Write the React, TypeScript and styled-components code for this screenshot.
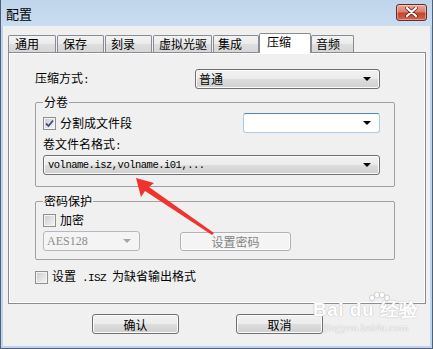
import React from "react";
import styled, { createGlobalStyle } from "styled-components";

const GlobalStyle = createGlobalStyle`
  html, body {
    margin: 0;
    padding: 0;
    background: #ffffff;
  }
  body {
    font-family: "Noto Sans CJK SC", "Liberation Sans", sans-serif;
    font-size: 12px;
    color: #000;
  }
`;

const cjk = `"Noto Sans CJK SC", "Liberation Sans", sans-serif`;

const Window = styled.div`
  position: relative;
  width: 433px;
  height: 349px;
  box-sizing: border-box;
  border: 1px solid #4f6275;
  border-top: none;
  background: #bcd4ee;
  display: flex;
  flex-direction: column;
  overflow: hidden;
`;

const TitleBar = styled.div`
  height: 26px;
  flex: none;
  display: flex;
  align-items: center;
  justify-content: space-between;
  padding: 0 5px 0 5px;
  background: linear-gradient(#c0d5ec, #cadcf0);
`;

const Title = styled.span`
  font-family: ${cjk};
  font-size: 13px;
  line-height: 14px;
  margin-top: 2px;
`;

const CloseButton = styled.div`
  width: 31px;
  height: 17px;
  box-sizing: border-box;
  margin-top: -2px;
  border: 1px solid #6a2b22;
  border-radius: 3px;
  background: linear-gradient(#e9a99b 0%, #d9806f 45%, #c3442f 55%, #d0654f 100%);
  box-shadow: inset 0 0 0 1px rgba(255, 255, 255, 0.35);
  display: flex;
  align-items: center;
  justify-content: center;
`;

const Client = styled.div`
  flex: 1;
  margin: 0 2px 2px 2px;
  background: #f0f0f0;
  display: flex;
  flex-direction: column;
  padding: 0 4px 0 5px;
`;

const TabStrip = styled.div`
  display: flex;
  align-items: flex-end;
  height: 19px;
  margin-top: 7px;
`;

const Tab = styled.div<{ $w: number; $ml: number; $pl: number; $active?: boolean }>`
  box-sizing: border-box;
  width: ${(p) => p.$w}px;
  margin-left: ${(p) => p.$ml}px;
  height: ${(p) => (p.$active ? 20 : 17)}px;
  margin-bottom: ${(p) => (p.$active ? -1 : 0)}px;
  padding-left: ${(p) => p.$pl}px;
  border: 1px solid #898c95;
  border-bottom: none;
  border-radius: 2px 2px 0 0;
  background: ${(p) =>
    p.$active ? "#ffffff" : "linear-gradient(#f3f3f3 0%, #ebebeb 50%, #dedede 51%, #d6d6d6 100%)"};
  font-family: ${cjk};
  font-size: 12px;
  line-height: ${(p) => (p.$active ? 15 : 16)}px;
  position: relative;
  z-index: ${(p) => (p.$active ? 2 : 1)};
  white-space: nowrap;
`;

const Panel = styled.div`
  width: 418px;
  height: 252px;
  box-sizing: border-box;
  border: 1px solid #898c95;
  box-shadow: inset 0 0 0 1px #ffffff;
  background: #f0f0f0;
  padding: 16px 0 0 26px;
  display: flex;
  flex-direction: column;
`;

const Row = styled.div`
  display: flex;
  align-items: center;
`;

const Label = styled.span<{ $w?: number; $disabled?: boolean }>`
  font-family: ${cjk};
  font-size: 12px;
  line-height: 14px;
  width: ${(p) => (p.$w ? `${p.$w}px` : "auto")};
  color: ${(p) => (p.$disabled ? "#8d8d8d" : "#000")};
  white-space: pre;
`;

const Latin = styled.span`
  font-family: "Liberation Mono", monospace;
  font-size: 11px;
  letter-spacing: -0.6px;
`;

const Combo = styled.div<{ $w: number; $variant?: "button" | "edit" | "disabled" }>`
  box-sizing: border-box;
  width: ${(p) => p.$w}px;
  height: 20px;
  border-radius: 3px;
  border: 1px solid
    ${(p) => (p.$variant === "edit" ? "#abcbe6" : p.$variant === "disabled" ? "#b6b9bc" : "#707070")};
  border-top-color: ${(p) => (p.$variant === "edit" ? "#4f86b3" : undefined)};
  background: ${(p) =>
    p.$variant === "edit"
      ? "#ffffff"
      : p.$variant === "disabled"
      ? "#f4f4f4"
      : "linear-gradient(#f2f2f2 0%, #ebebeb 50%, #dddddd 51%, #cfcfcf 100%)"};
  box-shadow: ${(p) => (p.$variant === "button" || !p.$variant ? "inset 0 0 0 1px #fbfbfb" : "none")};
  display: flex;
  align-items: center;
  justify-content: space-between;
  padding: 0 8px 0 3px;
`;

const ComboText = styled.span<{ $mono?: boolean; $disabled?: boolean }>`
  font-family: ${(p) => (p.$mono ? `"Liberation Mono", monospace` : p.$disabled ? `"Liberation Serif", serif` : cjk)};
  font-size: ${(p) => (p.$mono ? "10.5px" : "12px")};
  letter-spacing: ${(p) => (p.$mono ? "-0.5px" : "0")};
  line-height: 14px;
  color: ${(p) => (p.$disabled ? "#8d8d8d" : "#000")};
  white-space: nowrap;
  margin-left: ${(p) => (p.$mono ? 1 : 0)}px;
`;

const Arrow = styled.span<{ $disabled?: boolean }>`
  width: 0;
  height: 0;
  border-left: 4px solid transparent;
  border-right: 4px solid transparent;
  border-top: 4px solid ${(p) => (p.$disabled ? "#a6a6a6" : "#000")};
`;

const Group = styled.div<{ $mt: number; $pb: number }>`
  box-sizing: border-box;
  width: 360px;
  margin-top: ${(p) => p.$mt}px;
  border: 1px solid #a0a0a0;
  border-radius: 2px;
  padding: 0 14px ${(p) => p.$pb}px 7px;
  display: flex;
  flex-direction: column;
`;

const Legend = styled.span`
  align-self: flex-start;
  margin-top: -8px;
  padding: 0 1px;
  background: #f0f0f0;
  font-family: ${cjk};
  font-size: 12px;
  line-height: 14px;
`;

const CheckBox = styled.span`
  box-sizing: border-box;
  width: 13px;
  height: 13px;
  flex: none;
  border: 1px solid #8e8f8f;
  background: linear-gradient(135deg, #cbcbcb 0%, #f6f6f6 100%);
  box-shadow: inset 0 0 0 1px #f4f4f4;
  display: flex;
  align-items: center;
  justify-content: center;
  margin-right: 4px;
`;

const PushButton = styled.div<{ $w: number; $h?: number; $disabled?: boolean }>`
  box-sizing: border-box;
  width: ${(p) => p.$w}px;
  height: ${(p) => p.$h ?? 20}px;
  border: 1px solid ${(p) => (p.$disabled ? "#adb2b5" : "#707070")};
  border-radius: 3px;
  background: ${(p) =>
    p.$disabled ? "#f4f4f4" : "linear-gradient(#f2f2f2 0%, #ebebeb 50%, #dddddd 51%, #cfcfcf 100%)"};
  box-shadow: inset 0 0 0 1px #fbfbfb;
  display: flex;
  align-items: center;
  justify-content: center;
  font-family: ${cjk};
  font-size: 12px;
  color: ${(p) => (p.$disabled ? "#838383" : "#000")};
`;

const ButtonRow = styled.div`
  display: flex;
  gap: 57px;
  margin-top: 10px;
  padding-left: 84px;
`;

const Overlay = styled.svg`
  position: absolute;
  left: 0;
  top: 0;
  pointer-events: none;
`;

const Watermark = styled.div`
  position: absolute;
  left: 312px;
  top: 292px;
  display: flex;
  flex-direction: column;
  align-items: center;
  pointer-events: none;
  color: #ffffff;
  text-shadow: 0 0 1px #b9b9b9, 0 0 1px #b9b9b9;
`;

const WmTop = styled.span`
  font-family: "Liberation Sans", sans-serif;
  font-weight: bold;
  font-size: 19px;
  line-height: 22px;
  letter-spacing: 0.5px;
`;

const WmBottom = styled.span`
  font-family: "Liberation Serif", serif;
  font-size: 11px;
  line-height: 12px;
  letter-spacing: 0.2px;
`;

const tabs = [
  { label: "通用", w: 48, ml: 0, pl: 6 },
  { label: "保存", w: 47, ml: 1, pl: 5 },
  { label: "刻录", w: 47, ml: 1, pl: 5 },
  { label: "虚拟光驱", w: 59, ml: 1, pl: 5 },
  { label: "集成", w: 46, ml: 1, pl: 4 },
  { label: "压缩", w: 52, ml: 0, pl: 7, active: true },
  { label: "音频", w: 43, ml: 0, pl: 4 },
];

const Check = () => (
  <svg width="9" height="9" viewBox="0 0 9 9">
    <path d="M1 4.5 L3.5 7 L8 1.5" fill="none" stroke="#3b4f8a" strokeWidth="1.8" />
  </svg>
);

const Paw = () => (
  <svg width="22" height="10" viewBox="0 0 22 10" style={{ marginLeft: 26, marginBottom: -3 }}>
    <g fill="#ffffff" stroke="#c4c4c4" strokeWidth="0.8">
      <ellipse cx="4" cy="6" rx="2.5" ry="3" />
      <ellipse cx="9" cy="3" rx="2.5" ry="3" />
      <ellipse cx="14" cy="3" rx="2.5" ry="3" />
      <ellipse cx="19" cy="6" rx="2.5" ry="3" />
    </g>
  </svg>
);

export default function App() {
  return (
    <>
      <GlobalStyle />
      <Window>
        <TitleBar>
          <Title>配置</Title>
          <CloseButton>
            <svg width="13" height="10" viewBox="0 0 13 10">
              <path
                d="M2 1 L11 9 M11 1 L2 9"
                stroke="#5b2118"
                strokeWidth="3.6"
                strokeLinecap="round"
              />
              <path d="M2 1 L11 9 M11 1 L2 9" stroke="#ffffff" strokeWidth="2.2" strokeLinecap="round" />
            </svg>
          </CloseButton>
        </TitleBar>
        <Client>
          <TabStrip>
            {tabs.map((t) => (
              <Tab key={t.label} $w={t.w} $ml={t.ml} $pl={t.pl} $active={t.active}>
                {t.label}
              </Tab>
            ))}
          </TabStrip>
          <Panel>
            <Row>
              <Label $w={160}>
                压缩方式<Latin>:</Latin>
              </Label>
              <Combo $w={185}>
                <ComboText>普通</ComboText>
                <Arrow />
              </Combo>
            </Row>

            <Group $mt={13} $pb={11}>
              <Legend>分卷</Legend>
              <Row style={{ marginTop: 4, justifyContent: "space-between" }}>
                <Row>
                  <CheckBox>
                    <Check />
                  </CheckBox>
                  <Label>分割成文件段</Label>
                </Row>
                <Combo $w={137} $variant="edit">
                  <span />
                  <Arrow />
                </Combo>
              </Row>
              <Label style={{ marginTop: 4 }}>
                卷文件名格式<Latin>:</Latin>
              </Label>
              <Combo $w={337} style={{ marginTop: 2 }}>
                <ComboText $mono>volname.isz,volname.i01,...</ComboText>
                <Arrow />
              </Combo>
            </Group>

            <Group $mt={14} $pb={8}>
              <Legend>密码保护</Legend>
              <Row style={{ marginTop: 5 }}>
                <CheckBox />
                <Label>加密</Label>
              </Row>
              <Row style={{ marginTop: 4 }}>
                <Combo $w={97} $variant="disabled">
                  <ComboText $disabled>AES128</ComboText>
                  <Arrow $disabled />
                </Combo>
                <PushButton $w={111} $h={19} $disabled style={{ marginLeft: 40 }}>
                  设置密码
                </PushButton>
              </Row>
            </Group>

            <Row style={{ marginTop: 9 }}>
              <CheckBox />
              <Label>
                设置<Latin> .ISZ </Latin>为缺省输出格式
              </Label>
            </Row>
          </Panel>
          <ButtonRow>
            <PushButton $w={87}>确认</PushButton>
            <PushButton $w={87}>取消</PushButton>
          </ButtonRow>
        </Client>

        <Overlay width="433" height="349" viewBox="0 0 433 349">
          <polygon
            points="135,178 153,183 148,187 213,233 211,235 144,191 140,197"
            fill="#f0332d"
          />
        </Overlay>

        <Watermark>
          <Paw />
          <WmTop>Bai du 经验</WmTop>
          <WmBottom>jingyan.baidu.com</WmBottom>
        </Watermark>
      </Window>
    </>
  );
}
